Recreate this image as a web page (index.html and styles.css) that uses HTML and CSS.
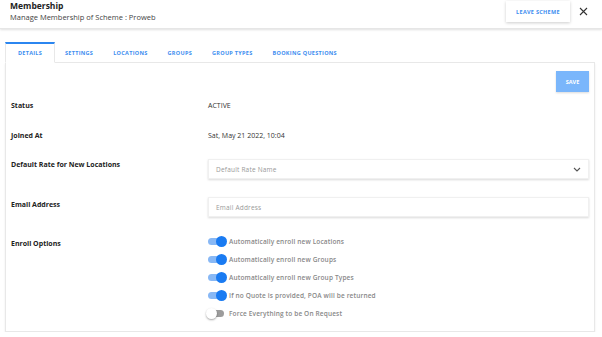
FILE: index.html
```html
<!DOCTYPE html>
<html lang="en">
<head>
    <meta charset="UTF-8">
    <title>Membership</title>
    <link rel="stylesheet" href="styles.css">
</head>
<body>

<!-- Cabecera -->
<div class="header">
    <div class="header-text">
        <div class="title">Membership</div>
        <div class="subtitle">Manage Membership of Scheme : Proweb</div>
    </div>
    <button class="leave-btn">LEAVE SCHEME</button>
    <button class="close-btn">
        <svg width="9" height="9" viewBox="0 0 9 9"><path d="M1 1 L8 8 M8 1 L1 8" stroke="#333" stroke-width="1.1" fill="none"/></svg>
    </button>
</div>

<div class="tabs">
    <div class="tab active">DETAILS</div>
    <div class="tab">SETTINGS</div>
    <div class="tab">LOCATIONS</div>
    <div class="tab">GROUPS</div>
    <div class="tab">GROUP TYPES</div>
    <div class="tab">BOOKING QUESTIONS</div>
    <div class="tab-fill"></div>
</div>

<div class="card">
    <div class="save-row">
        <button class="save-btn">SAVE</button>
    </div>

    <div class="row row-status">
        <div class="label">Status</div>
        <div class="value">ACTIVE</div>
    </div>
    <div class="row row-joined">
        <div class="label">Joined At</div>
        <div class="value">Sat, May 21 2022, 10:04</div>
    </div>
    <div class="row row-field row-rate">
        <div class="label">Default Rate for New Locations</div>
        <div class="field select">
            <span>Default Rate Name</span>
            <svg width="8" height="5" viewBox="0 0 8 5"><path d="M1 1 L4 4 L7 1" stroke="#555" stroke-width="1.1" fill="none"/></svg>
        </div>
    </div>
    <div class="row row-field row-email">
        <div class="label">Email Address</div>
        <div class="field"><span>Email Address</span></div>
    </div>
    <div class="row row-toggles">
        <div class="label">Enroll Options</div>
        <div class="toggles">
            <div class="toggle-item"><span class="toggle on"></span>Automatically enroll new Locations</div>
            <div class="toggle-item"><span class="toggle on"></span>Automatically enroll new Groups</div>
            <div class="toggle-item"><span class="toggle on"></span>Automatically enroll new Group Types</div>
            <div class="toggle-item"><span class="toggle on"></span>If no Quote is provided, POA will be returned</div>
            <div class="toggle-item"><span class="toggle"></span>Force Everything to be On Request</div>
        </div>
    </div>
</div>

</body>
</html>
```

FILE: styles.css
```css
body {
    font-family: "Open Sans", Arial, sans-serif;
    background-color: #fff;
    margin: 0;
    color: #333;
}
button {
    font-family: inherit;
    cursor: pointer;
}
.header {
    height: 28px;
    display: flex;
    align-items: flex-start;
    padding: 0 10px 0 10px;
    box-shadow: 0 1px 2px rgba(0, 0, 0, 0.12);
    border-bottom: 1px solid #e6e6e6;
}
.header-text {
    flex: 1;
    padding-top: 0;
}
.title {
    font-size: 8.5px;
    font-weight: 700;
    color: #222;
    line-height: 11px;
}
.subtitle {
    font-size: 7.5px;
    color: #444;
    line-height: 11px;
    margin-top: 1px;
}
.leave-btn {
    margin-top: 1px;
    width: 64px;
    height: 21px;
    background-color: #fff;
    border: none;
    box-shadow: 0 1px 3px rgba(0, 0, 0, 0.2);
    color: #3d8ef0;
    font-size: 5.5px;
    font-weight: 700;
    letter-spacing: 0.3px;
    padding: 0;
}
.close-btn {
    background: none;
    border: none;
    padding: 0;
    margin: 7px 4px 0 9px;
    width: 9px;
    height: 9px;
    display: flex;
}
.tabs {
    display: flex;
    margin: 13px 7px 0 5px;
    height: 21px;
}
.tab {
    border-top: 2px solid transparent;
    border-bottom: 1px solid #e8e8e8;
    color: #3d8ef0;
    font-size: 5.5px;
    font-weight: 700;
    letter-spacing: 0.3px;
    display: flex;
    align-items: center;
    justify-content: center;
    padding: 0 10px;
}
.tab.active {
    width: 48px;
    padding: 0;
    border-top: 2px solid #2b86f0;
    border-left: 1px solid #e8e8e8;
    border-right: 1px solid #e8e8e8;
    border-bottom: 1px solid #fff;
}
.tab-fill {
    flex: 1;
    border-bottom: 1px solid #e8e8e8;
}
.card {
    margin: 0 7px 0 5px;
    border: 1px solid #e8e8e8;
    border-top: none;
    box-shadow: 0 1px 2px rgba(0, 0, 0, 0.08);
    padding: 8px 5px 6px 5px;
    height: 254px;
}
.save-row {
    display: flex;
    justify-content: flex-end;
}
.save-btn {
    width: 33px;
    height: 21px;
    background-color: #7ab6fb;
    color: #fff;
    border: none;
    font-size: 5.5px;
    font-weight: 700;
    padding: 0;
    box-shadow: 0 1px 2px rgba(0, 0, 0, 0.15);
}
.row {
    display: flex;
    align-items: flex-start;
}
.label {
    width: 197px;
    font-size: 7px;
    font-weight: 700;
    color: #222;
    line-height: 10px;
}
.value {
    font-size: 7px;
    color: #333;
    line-height: 10px;
}
.row-status {
    margin-top: 9px;
}
.row-joined {
    margin-top: 20px;
}
.row-field .label {
    padding-top: 1px;
}
.row-rate {
    margin-top: 18px;
}
.row-email {
    margin-top: 18px;
}
.row-email .label {
    padding-top: 3px;
}
.field {
    flex: 1;
    box-sizing: border-box;
    height: 20px;
    box-shadow: 0 1px 2px rgba(0, 0, 0, 0.15);
    border: 1px solid #f0f0f0;
    display: flex;
    align-items: center;
    justify-content: space-between;
    padding: 0 7px;
    font-size: 6.5px;
    color: #999;
    letter-spacing: 0.2px;
}
.row-toggles {
    margin-top: 22px;
}
.toggles {
    display: flex;
    flex-direction: column;
    gap: 7px;
    margin-top: -3px;
}
.toggle-item {
    display: flex;
    align-items: center;
    font-size: 6.5px;
    color: #888;
    font-weight: 600;
    letter-spacing: 0.15px;
    height: 11px;
}
.toggle {
    position: relative;
    width: 16px;
    height: 7px;
    border-radius: 4px;
    background-color: #9c9c9c;
    margin-right: 5px;
}
.toggle::after {
    content: "";
    position: absolute;
    left: -2px;
    top: -2px;
    width: 11px;
    height: 11px;
    border-radius: 50%;
    background-color: #fff;
    box-shadow: 0 1px 2px rgba(0, 0, 0, 0.35);
}
.toggle.on {
    background-color: #88b8f5;
}
.toggle.on::after {
    left: 8px;
    background-color: #1a7bf2;
    box-shadow: none;
}
```
